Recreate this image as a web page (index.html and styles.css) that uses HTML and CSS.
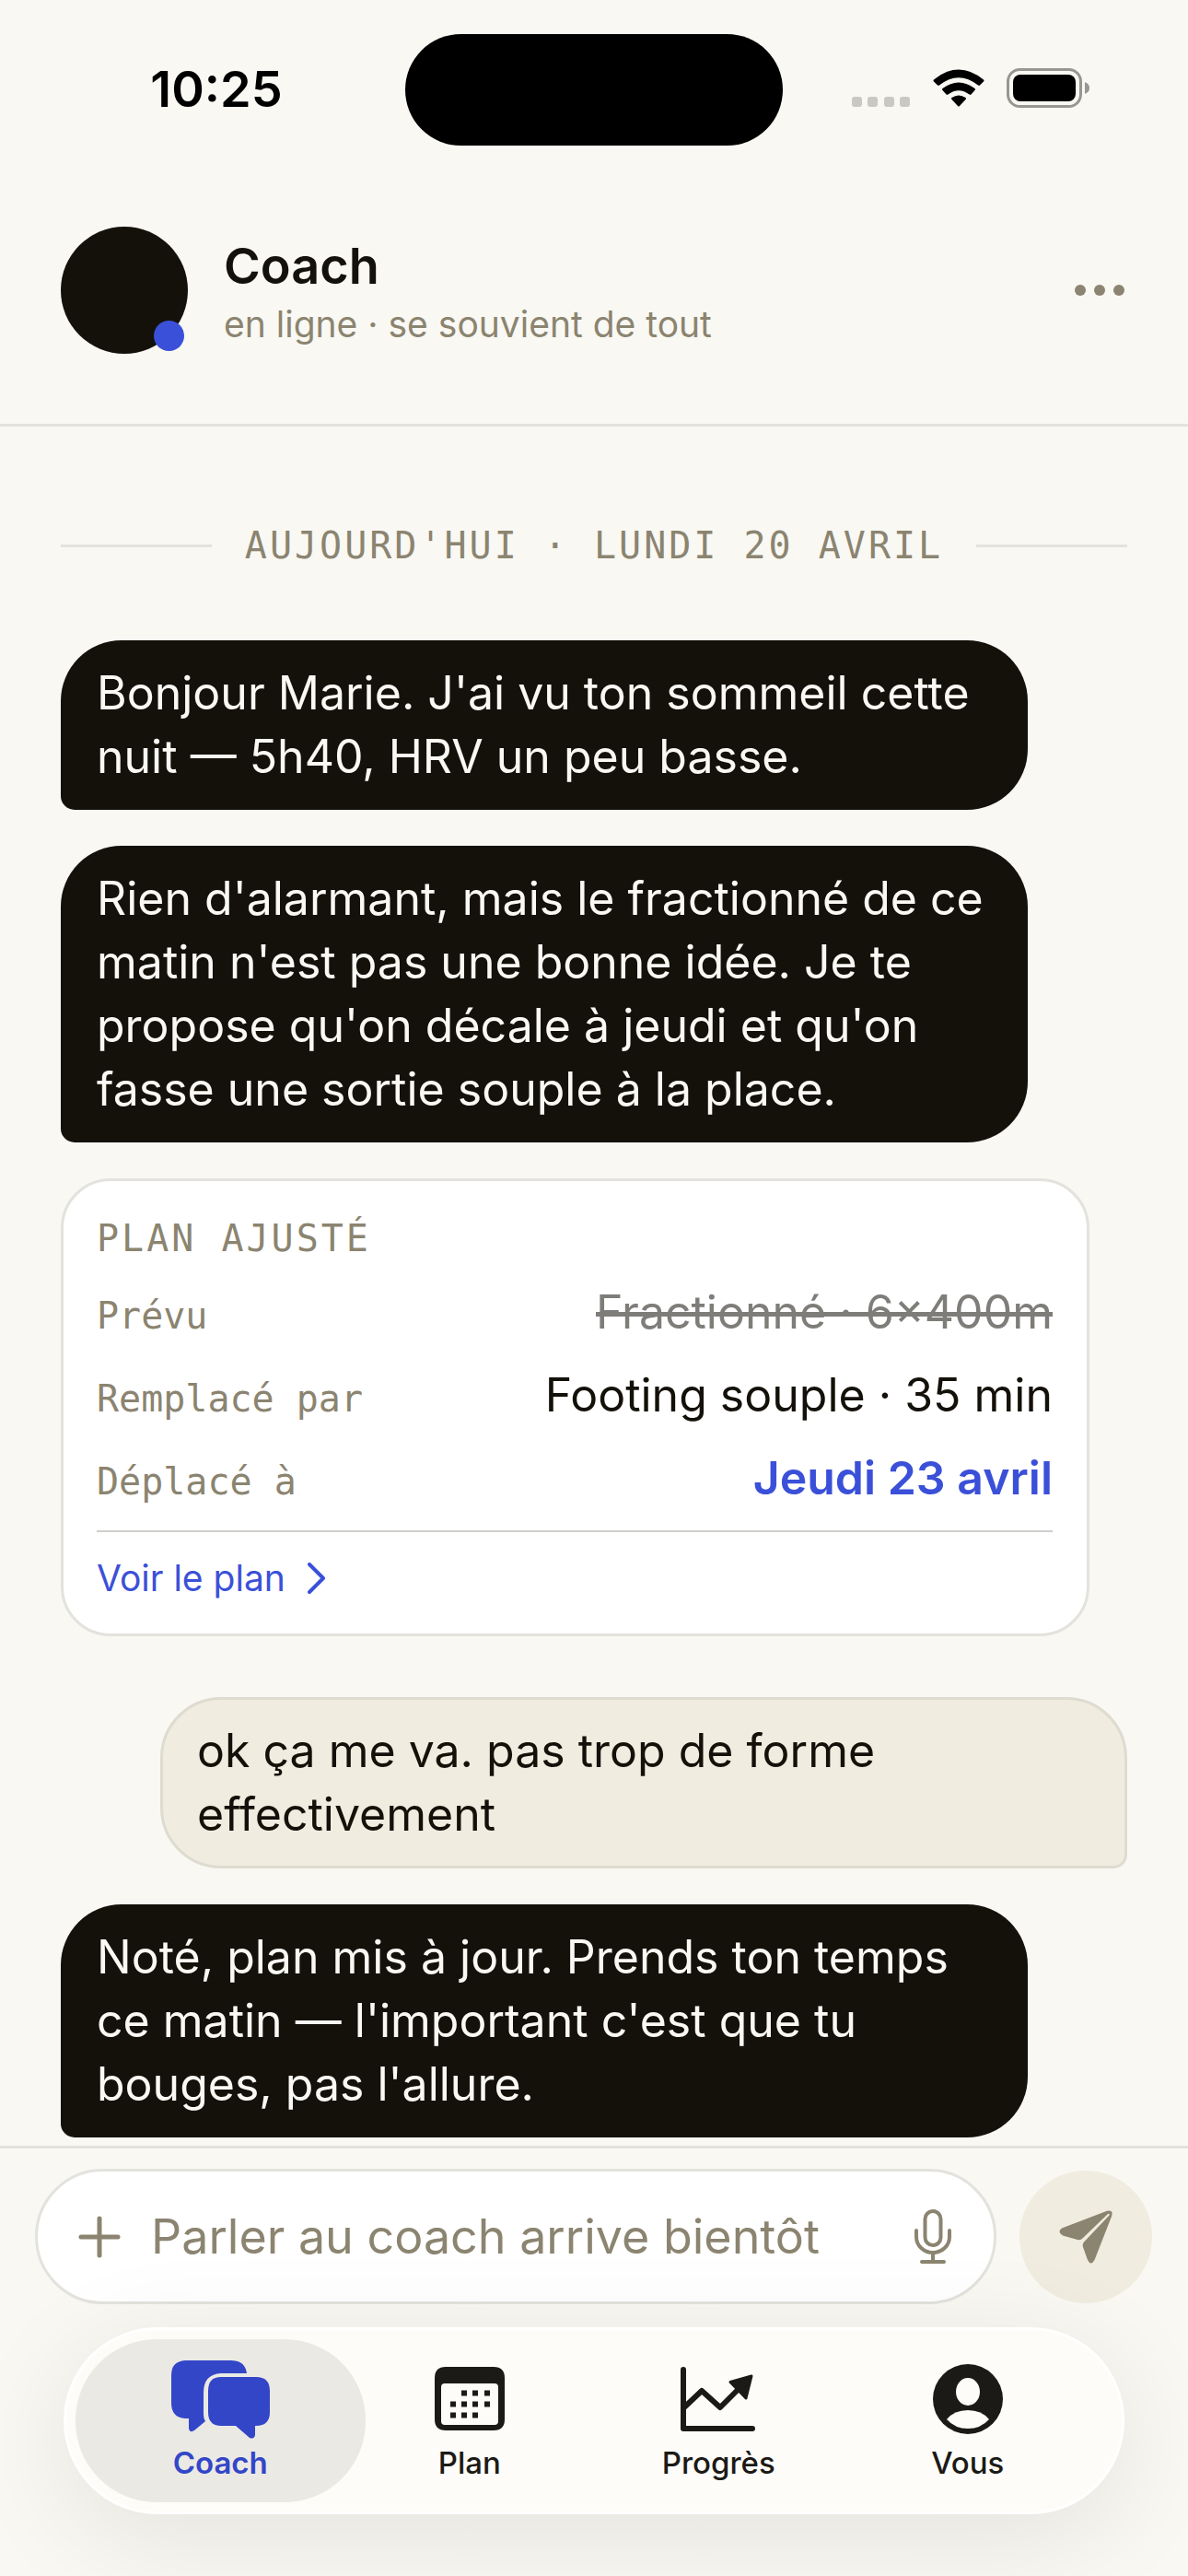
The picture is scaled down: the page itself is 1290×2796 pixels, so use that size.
FILE: index.html
```html
<!DOCTYPE html>
<html lang="fr">
<head>
<meta charset="utf-8">
<meta name="viewport" content="width=device-width, initial-scale=1">
<title>Coach</title>
<link rel="stylesheet" href="styles.css">
</head>
<body>
<div class="app">
  <div class="status">
    <time class="status-time">10:25</time>
    <div class="island"></div>
    <div class="status-icons">
      <svg width="64" height="12" viewBox="0 0 64 12" fill="#c9c8c3"><rect width="11" height="11" rx="3"/><rect x="17" width="11" height="11" rx="3"/><rect x="35" width="11" height="11" rx="3"/><rect x="52" width="11" height="11" rx="3"/></svg>
      <svg width="56" height="42" viewBox="0 0 56 42"><path d="M1 11.500Q0 12.500 1 13.500L5 17.500Q6 18 7 17.500Q28 1 49 17.500Q50 18 51 17.500L55 13.500Q56 12.500 55 11.500Q28-10.500 1 11.500ZM10.500 21Q9.500 22 10.500 23L14.500 27.500Q15.500 28 16.500 27.500Q28 19 39.500 27.500Q40.500 28 41.500 27.500L45.500 23Q46.500 22 45.500 21Q28 8 10.500 21ZM20.500 31Q19.500 32 20.500 33L27 40Q28 41 29 40L35.500 33Q36.500 32 35.500 31Q28 26 20.500 31Z"/></svg>
      <svg width="90" height="43" viewBox="0 0 90 43"><rect x="1.500" y="1.500" width="79" height="40" rx="13" fill="none" stroke="#979691" stroke-width="3"/><rect x="7" y="7" width="68" height="29" rx="8"/><path d="M85 15v13q5-2 5-6.500t-5-6.500z" fill="#979691"/></svg>
    </div>
  </div>

  <header class="header">
    <div class="avatar"><span class="presence"></span></div>
    <div class="who">
      <h1 class="name">Coach</h1>
      <p class="state">en ligne · se souvient de tout</p>
    </div>
    <button class="more" type="button" aria-label="Plus d'options">
      <svg width="54" height="12" viewBox="0 0 54 12" fill="#8b8470"><circle cx="6" cy="6" r="6"/><circle cx="27" cy="6" r="6"/><circle cx="48" cy="6" r="6"/></svg>
    </button>
  </header>

  <main class="chat">
    <p class="day">AUJOURD'HUI · LUNDI 20 AVRIL</p>
    <p class="bubble">Bonjour Marie. J'ai vu ton sommeil cette nuit — 5h40, HRV un peu basse.</p>
    <p class="bubble">Rien d'alarmant, mais le fractionné de ce matin n'est pas une bonne idée. Je te propose qu'on décale à jeudi et qu'on fasse une sortie souple à la place.</p>
    <section class="plan">
      <h2 class="plan-title">PLAN AJUSTÉ</h2>
      <dl class="rows">
        <div class="row"><dt>Prévu</dt><dd><s>Fractionné · 6×400m</s></dd></div>
        <div class="row"><dt>Remplacé par</dt><dd>Footing souple · 35 min</dd></div>
        <div class="row"><dt>Déplacé à</dt><dd class="moved">Jeudi 23 avril</dd></div>
      </dl>
      <a class="plan-link" href="#plan">Voir le plan
        <svg width="20" height="34" viewBox="0 0 20 34" fill="none" stroke="currentColor" stroke-width="4" stroke-linecap="round" stroke-linejoin="round"><path d="M2 2l15 15L2 32"/></svg>
      </a>
    </section>
    <p class="bubble bubble-me">ok ça me va. pas trop de forme effectivement</p>
    <p class="bubble">Noté, plan mis à jour. Prends ton temps ce matin — l'important c'est que tu bouges, pas l'allure.</p>
  </main>

  <footer class="dock">
    <form class="composer">
      <div class="field">
        <button class="icon-button" type="button" aria-label="Ajouter">
          <svg width="46" height="46" viewBox="0 0 46 46" stroke="currentColor" stroke-width="5" stroke-linecap="round"><path d="M23 3v40M3 23h40"/></svg>
        </button>
        <input class="input" type="text" aria-label="Message" placeholder="Parler au coach arrive bientôt">
        <button class="icon-button" type="button" aria-label="Dicter">
          <svg width="40" height="60" viewBox="0 0 40 60" fill="none" stroke="currentColor" stroke-width="4" stroke-linecap="round" stroke-linejoin="round"><rect x="11.500" y="2" width="17" height="37" rx="8.500"/><path d="M2 23v7a18 17 0 0 0 36 0v-7M20 47v10M8 57h24"/></svg>
        </button>
      </div>
      <button class="send" type="submit" aria-label="Envoyer">
        <svg width="58" height="58" viewBox="0 0 58 58" fill="#8b8470"><path d="M3 19.500L52 .8Q58-.5 57.500 4L55 5.500Q54.500 2.500 52 5L25.500 30.500Q23.500 33 20 32L4 27.500Q-2.500 23.500 3 19.500Z"/><path d="M57.500 3.500Q57.500 6 56.500 8L38.500 54Q34.500 61 31 54L26 40Q25 37 27 34.500L54.500 5.500Z"/></svg>
      </button>
    </form>

    <nav class="tabs">
      <a class="tab tab-on" href="#coach" aria-current="page">
        <svg width="108" height="88" viewBox="0 0 108 88" fill="currentColor"><path d="M16 1h50q15 0 17 14H55Q36 16 36 36v24q0 4 2 7L26 77q-5 3-6-2V64h-4Q1 63 1 47V17Q1 2 16 1z"/><path d="M55 19h38q15 0 15 15v23q0 15-15 15h-1v10q-1 5-6 3L71 72H55q-14 0-14-15V34q0-15 14-15z"/></svg>
        <span>Coach</span>
      </a>
      <a class="tab" href="#plan">
        <svg width="76" height="88" viewBox="0 0 76 88" fill="currentColor"><path fill-rule="evenodd" d="M12 8h52q12 0 12 12v45q0 12-12 12H12Q0 77 0 65V20Q0 8 12 8zM11 26q-4 0-4 4v37q0 4 4 4h54q4 0 4-4V30q0-4-4-4z"/><path d="M29 33.500h6v6h-6zM41 33.500h6v6h-6zM54 33.500h6v6h-6zM17 45.500h6v6h-6zM29 45.500h6v6h-6zM41 45.500h6v6h-6zM54 45.500h6v6h-6zM17 57.500h6v6h-6zM29 57.500h6v6h-6zM41 57.500h6v6h-6z"/></svg>
        <span>Plan</span>
      </a>
      <a class="tab" href="#progres">
        <svg width="82" height="88" viewBox="0 0 82 88" fill="none" stroke="currentColor" stroke-width="6" stroke-linecap="round" stroke-linejoin="round"><path d="M3 11v64h75M5 51l18-17 20 18 22-22"/><path d="M77 18L54 24.500 71 42z" fill="currentColor" stroke-width="3"/></svg>
        <span>Progrès</span>
      </a>
      <a class="tab" href="#vous">
        <svg width="78" height="88" viewBox="0 0 78 88"><circle cx="39" cy="43" r="38" fill="currentColor"/><ellipse cx="39" cy="35" rx="13" ry="15" fill="#fdfcf8"/><path fill="#fdfcf8" d="M16 65q8-10 23-10t23 10q-9 10-23 10T16 65z"/></svg>
        <span>Vous</span>
      </a>
    </nav>
  </footer>
</div>
</body>
</html>
```
FILE: styles.css
```css
* { box-sizing: border-box; margin: 0; padding: 0; }

body {
  background: #f9f8f3;
  color: #14110a;
  font-family: Inter, "Liberation Sans", sans-serif;
  font-size: 50px;
}

button { border: 0; background: none; color: inherit; font: inherit; display: flex; }
a { color: inherit; text-decoration: none; }
svg { display: block; flex: none; }

.app { min-height: 100vh; display: flex; flex-direction: column; }

.status {
  display: grid;
  grid-template-columns: 1fr 410px 1fr;
  align-items: center;
  padding: 37px 0 36px;
}
.status-time { justify-self: center; padding: 0 0 2px 30px; font-size: 54px; font-weight: 600; color: #000; }
.island { height: 121px; border-radius: 61px; background: #000; }
.status-icons { display: flex; align-items: flex-end; gap: 24px; padding: 0 0 4px 75px; }

.header {
  display: flex;
  align-items: center;
  gap: 39px;
  padding: 52px 66px 76px;
  border-bottom: 3px solid #e3e2dd;
}
.avatar { position: relative; width: 138px; height: 138px; border-radius: 50%; background: #14110a; }
.presence { position: absolute; right: 4px; bottom: 3px; width: 33px; height: 33px; border-radius: 50%; background: #3b50d8; }
.who { flex: 1; padding-top: 4px; }
.name { font-size: 54px; line-height: 66px; font-weight: 600; }
.state { padding-top: 4px; font-size: 39px; line-height: 52px; color: #8b8470; }
.more { padding: 12px 3px; }

.chat { flex: 1; display: flex; flex-direction: column; align-items: flex-start; gap: 39px; padding: 102px 66px 9px; }

.day, .plan-title, .row dt { font-family: "DejaVu Sans Mono", "Liberation Mono", monospace; font-size: 40px; line-height: 54px; color: #8b8470; font-weight: 400; }
.day { align-self: stretch; display: flex; align-items: center; gap: 36px; margin-bottom: 37px; letter-spacing: 3px; white-space: nowrap; }
.day::before, .day::after { content: ""; flex: 1; height: 3px; background: #e3e2dd; }

.bubble { width: 1050px; max-width: 91%; padding: 23px 39px; border-radius: 66px 66px 66px 15px; background: #14110a; color: #f9f8f3; line-height: 69px; }
.bubble-me { align-self: flex-end; margin-top: 27px; padding: 21px 37px; border: 3px solid #dedbd0; border-radius: 66px 66px 15px 66px; background: #f0ecdf; color: #14110a; }

.plan { width: 1117px; max-width: 97%; padding: 35px 37px 35px 36px; border: 3px solid #e3e2dd; border-radius: 54px; background: #fff; }
.plan-title { letter-spacing: 3px; margin-bottom: 8px; }
.rows { border-bottom: 2px solid #d0cfcb; padding-bottom: 12px; }
.row { display: flex; justify-content: space-between; align-items: baseline; line-height: 90px; }
.row s { color: #7f7d79; }
.row .moved { color: #3b50d8; font-weight: 600; }
.plan-link { display: flex; align-items: center; gap: 24px; padding-top: 24px; line-height: 51px; font-size: 39px; color: #3b50d8; }

.dock { border-top: 3px solid #e3e2dd; padding: 22px 38px 69px; display: flex; flex-direction: column; gap: 25px; }
.composer { display: flex; align-items: center; gap: 25px; padding-right: 1px; }
.field { flex: 1; min-width: 0; display: flex; align-items: center; gap: 33px; height: 147px; padding: 0 46px 0 44px; border: 3px solid #e3e2dd; border-radius: 74px; background: #fff; color: #8b8470; }
.input { flex: 1; min-width: 0; border: 0; outline: 0; background: none; font: inherit; font-size: 52px; color: #14110a; }
.input::placeholder { color: #8b8470; opacity: 1; }
.send { width: 144px; height: 144px; align-items: center; justify-content: center; border-radius: 50%; background: #f0ecdf; }

.tabs {
  display: grid;
  grid-template-columns: repeat(4, 1fr);
  margin: 0 31px;
  padding: 10px 32px;
  border: 3px solid #fff;
  border-radius: 102px;
  background: #fdfcf8;
  box-shadow: 0 24px 120px rgba(0, 0, 0, 0.09);
}
.tab { display: flex; flex-direction: column; align-items: center; gap: 2px; height: 177px; padding-top: 22px; color: #1b1a16; font-size: 33px; line-height: 44px; font-weight: 500; }
.tab-on { margin: 0 -22px; border-radius: 88px; background: #eae9e4; color: #3346c8; font-weight: 600; }
```
